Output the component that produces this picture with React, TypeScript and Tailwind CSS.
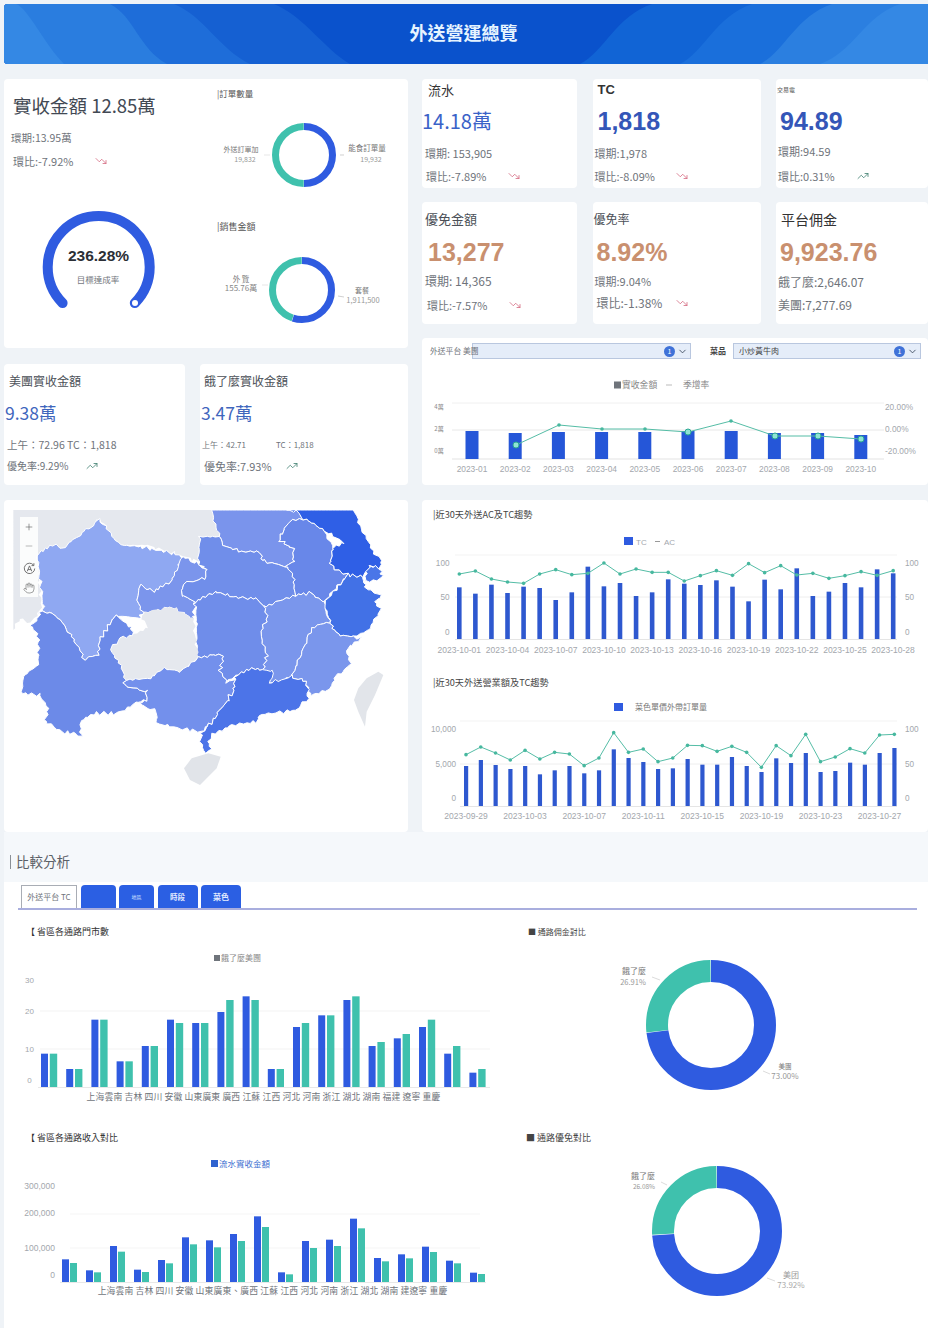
import React from "react";
import { ChevronDown, Hand, Minus, Plus, TrendingDown, TrendingUp } from "lucide-react";

const BLUE = "#2f5be0";
const TEAL = "#3fc1ad";
const GREY = "#a3a7ad";
const LATIN = "'Liberation Sans',sans-serif";

const Down = ({ className = "" }: { className?: string }) => (
  <TrendingDown size={12} strokeWidth={1.6} color="#d46a80" className={className} />
);
const Up = ({ className = "" }: { className?: string }) => (
  <TrendingUp size={12} strokeWidth={1.6} color="#3f7f70" className={className} />
);

function Ring({ cx, cy, r, sw, blue }: { cx: number; cy: number; r: number; sw: number; blue: number }) {
  const teal = 100 - blue;
  return (
    <g transform={`rotate(-90 ${cx} ${cy})`} fill="none" strokeWidth={sw}>
      <circle cx={cx} cy={cy} r={r} pathLength={100} stroke={BLUE} strokeDasharray={`${blue} ${teal}`} />
      <circle cx={cx} cy={cy} r={r} pathLength={100} stroke={TEAL} strokeDasharray={`${teal - 0.3} ${blue + 0.3}`} strokeDashoffset={-(blue + 0.15)} />
    </g>
  );
}

const T = ({ x, y, s = 8, c = "#8a8f96", a = "middle", ls, ff, children }: { x: number; y: number; s?: number; c?: string; a?: "start" | "middle" | "end"; ls?: number; ff?: string; children: React.ReactNode }) => (
  <text x={x} y={y} fontSize={s} fill={c} textAnchor={a} letterSpacing={ls} fontFamily={ff}>{children}</text>
);

function Metric({ title, value, l1, l2, arrow, cls, titleCls, valueCls, l1Cls, l2Cls }: { title: string; value: string; l1: string; l2: string; arrow?: React.ReactNode; cls: string; titleCls: string; valueCls: string; l1Cls: string; l2Cls: string }) {
  return (
    <div className={`rounded bg-white flex flex-col ${cls}`}>
      <div className={`h-4 leading-4 whitespace-nowrap ${titleCls}`}>{title}</div>
      <div className={`h-[30px] leading-[30px] whitespace-nowrap ${valueCls}`}>{value}</div>
      <div className={`h-4 leading-4 text-[#6f747b] whitespace-nowrap ${l1Cls}`}>{l1}</div>
      <div className={`h-4 leading-4 text-[#6f747b] flex items-center whitespace-nowrap ${l2Cls}`}>
        <span>{l2}</span>
        {arrow}
      </div>
    </div>
  );
}

const NUM = "font-['Liberation_Sans',sans-serif] font-bold text-[25px]";

function Select({ text, cls }: { text?: string; cls: string }) {
  return (
    <div className={`h-4 border border-[#b9c7df] bg-[#e5edf9] flex items-center ${cls}`}>
      <span className="flex-1 pl-[5px] text-[8px] text-[#444] leading-none">{text}</span>
      <span className="w-[11px] h-[11px] rounded-full bg-[#3f72d8] text-white text-[7px] leading-[11px] text-center">1</span>
      <ChevronDown size={11} strokeWidth={1.8} color="#334155" className="mx-[2px]" />
    </div>
  );
}

function Bars({ x0, step, w, base, tops, scaleY, fill = BLUE }: { x0: number; step: number; w: number; base: number; tops: number[]; scaleY: number; fill?: string }) {
  return (
    <g fill={fill}>
      {tops.map((t, i) => {
        const y = scaleY + t / 3;
        return <rect key={i} x={x0 + i * step} y={y} width={w} height={base - y} />;
      })}
    </g>
  );
}

function Trend({ x0, step, tops, scaleY, r = 1.8 }: { x0: number; step: number; tops: number[]; scaleY: number; r?: number }) {
  const pts = tops.map((t, i) => [x0 + i * step, scaleY + t / 3]);
  return (
    <g>
      <polyline points={pts.map((p) => p.join(",")).join(" ")} fill="none" stroke="#55bda6" strokeWidth={1} />
      {pts.map((p, i) => <circle key={i} cx={p[0]} cy={p[1]} r={r} fill="#47b89f" />)}
    </g>
  );
}

const A_BAR = [262,281,254,279,260,264,300,277,200,259,249,288,277,238,251,255,241,260,304,239,268,205,288,275,249,262,208,220];
const A_LINE = [222,213,237,246,250,222,209,224,220,189,222,207,217,217,243,227,212,226,191,218,197,225,220,235,227,215,226,212];
const B_BAR = [798,780,795,807,798,823,811,798,820,811,748,774,786,807,805,777,794,794,771,798,816,775,789,759,816,813,788,794,759,744];
const B_LINE = [764,741,759,780,751,777,757,762,797,774,698,757,747,785,774,736,737,754,739,757,802,737,767,703,785,771,746,759,705,703];
const C_B = [641,687,539,664,618,539,549,516,469,687,561,526,480,618,595,561,641,698];
const C_G = [641,687,539,664,618,549,549,480,480,687,549,526,469,606,582,539,618,687];
const D_B = [418,451,378,449,420,352,361,342,289,457,363,359,296,414,403,380,422,458];
const D_G = [429,457,395,456,430,373,382,363,321,463,384,378,325,424,415,396,430,462];

const MAP: [string, string][] = [
  ["#e5e8ee", "40,45 640,45 662,125 600,125 595,200 540,180 440,150 360,150 300,70 270,100 240,120 190,160 110,175 125,340 90,385 60,370 40,405"],
  ["#8fa8f2", "110,175 160,150 190,160 240,120 270,100 295,70 330,110 360,150 420,155 470,165 540,180 548,195 530,225 510,265 460,290 420,270 410,320 430,350 420,370 350,362 330,385 300,430 295,480 255,490 230,450 200,400 160,355 130,350 125,290"],
  ["#7b95ec", "548,185 590,205 620,225 615,250 550,265 545,300 585,320 580,375 540,345 500,335 445,355 430,350 410,320 420,270 460,290 510,265 530,225"],
  ["#7a94ec", "635,45 900,45 910,70 870,80 835,130 880,165 880,200 855,215 785,195 780,170 720,170 670,150 660,125"],
  ["#708eea", "600,125 660,125 670,150 720,170 780,170 785,195 855,215 880,240 885,300 840,320 790,335 770,310 740,310 700,305 645,290 585,320 545,300 550,265 615,250 620,225 595,200"],
  ["#6887e9", "910,70 870,80 835,130 880,165 880,200 855,215 880,240 885,300 930,295 975,320 1040,240 990,210 1000,155 975,110 950,90"],
  ["#2f5fe6", "860,45 1060,45 1100,130 1120,175 1145,195 1140,220 1110,210 1090,245 1040,240 990,210 1000,155 1030,140 975,110 950,90 910,70 890,50"],
  ["#4a76e8", "1110,210 1145,225 1145,250 1095,265 1095,245"],
  ["#4271e6", "1040,240 1090,245 1095,280 1145,300 1125,320 1140,345 1110,400 1060,425 1015,420 990,380 975,325"],
  ["#7a96ec", "885,300 930,295 975,320 975,345 990,380 935,400 915,450 875,545 830,560 805,565 790,525 800,480 780,420 800,370 790,335 840,320"],
  ["#7a96ec", "935,400 990,380 1015,420 1060,425 1080,430 1040,460 1050,510 1010,540 990,580 930,605 920,560 875,545 915,450"],
  ["#6f8dea", "645,290 700,305 740,310 770,310 790,335 800,370 780,420 800,480 790,525 755,520 710,540 680,560 660,530 670,480 625,480 590,490 590,380 585,320"],
  ["#e5e8ee", "420,370 440,355 500,335 540,345 580,375 585,420 595,490 540,530 490,520 450,550 375,555 360,510 335,460 360,430 395,420 445,395"],
  ["#6c8ae8", "120,350 160,355 200,400 230,450 255,490 295,480 300,430 330,385 350,362 370,380 395,395 400,420 360,430 335,460 360,510 375,555 370,570 440,590 440,615 410,625 340,655 280,655 240,680 245,725 220,715 180,710 135,680 145,640 115,600 65,595 70,545 115,510 115,420 90,395 110,380"],
  ["#7390ec", "375,555 450,550 490,520 540,530 590,490 625,480 670,480 660,530 680,560 705,555 700,590 680,620 650,660 630,690 600,710 540,700 470,685 470,650 415,625 440,615 440,590 370,570"],
  ["#4c74e8", "710,540 755,520 790,525 825,530 805,565 875,545 920,560 925,610 890,645 780,660 770,680 700,690 640,720 625,740 635,765 615,770 600,735 610,705 630,690 650,660 680,620 700,590 705,555"],
];

// Roughens a province outline: the offset depends only on position, so shared borders stay shared.
function rough(points: string): string {
  const p = points.split(" ").map((s) => s.split(",").map(Number));
  const out: string[] = [];
  p.forEach((a, i) => {
    const b = p[(i + 1) % p.length];
    const n = Math.max(1, Math.ceil(Math.hypot(b[0] - a[0], b[1] - a[1]) / 11));
    for (let k = 0; k < n; k++) {
      const x = a[0] + ((b[0] - a[0]) * k) / n;
      const y = a[1] + ((b[1] - a[1]) * k) / n;
      const f = y <= 46 || x <= 41 ? 0 : 1;
      const dx = f * (3.5 * Math.sin(y * 0.37 + x * 0.11) + 2.5 * Math.sin(x * 0.61 - y * 0.23));
      const dy = f * (3.5 * Math.sin(x * 0.33 - y * 0.13) + 2.5 * Math.sin(y * 0.57 + x * 0.29));
      out.push(`${(x + dx).toFixed(1)},${(y + dy).toFixed(1)}`);
    }
  });
  return out.join(" ");
}

export default function App() {
  return (
    <div className="w-[928px] h-[1328px] overflow-hidden bg-[#eff3f7] pt-1 font-['Noto_Sans_CJK_TC','Noto_Sans',sans-serif]">
      {/* Header */}
      <div className="relative ml-1 h-[60px] rounded-l overflow-hidden bg-[#0a52cc] flex items-center justify-center">
        <svg className="absolute inset-0" width="924" height="60" viewBox="0 0 924 60">
          <path d="M0 0H270C300 12 320 45 346 60H0Z" fill="#1560d2" />
          <path d="M0 0H170C200 12 215 45 246 60H0Z" fill="#1e6dd9" />
          <path d="M0 0H106C130 12 135 45 163 60H0Z" fill="#2a7ddf" />
          <path d="M0 0H12C24 4 40 40 60 60H0Z" fill="#3488e4" />
          <path d="M924 0H648C612 12 600 48 576 60H924Z" fill="#1164d5" />
          <path d="M924 0H748C712 12 700 48 676 60H924Z" fill="#1a6fdb" />
          <path d="M924 0H828C792 12 780 48 756 60H924Z" fill="#2b7fe0" />
          <path d="M924 0H896C860 12 850 48 816 60H924Z" fill="#3488e4" />
        </svg>
        <h1 className="relative mr-[5px] mb-[5px] text-[18px] font-bold text-[#e6f4ff] leading-none">外送營運總覽</h1>
      </div>

      {/* Top */}
      <div className="flex gap-[14px] mt-[15px] ml-1">
        <div className="w-[404px] flex flex-col">
          <div className="h-[269px] rounded bg-white flex">
            <div className="w-[205px] shrink-0">
              <div className="pl-[9px] pt-[14px] h-[39px] text-[18.5px] leading-6 text-[#424954] whitespace-nowrap">實收金額 12.85萬</div>
              <div className="pl-[7px] mt-[13px] h-[14px] text-[10.5px] leading-[14px] text-[#6f747b]">環期:13.95萬</div>
              <div className="pl-[9px] mt-[9px] h-[14px] text-[11px] leading-[14px] text-[#6f747b] flex items-center">
                <span>環比:-7.92%</span>
                <Down className="ml-[22px]" />
              </div>
              <svg className="block mt-[11px]" width="205" height="169" viewBox="4 179 205 169">
                <path d="M62.6 303.1 A51 51 0 1 1 134.8 303.1" fill="none" stroke={BLUE} strokeWidth="10" strokeLinecap="round" />
                <circle cx="135" cy="303" r="3" fill="white" />
                <text x="98.5" y="261" textAnchor="middle" fontSize="15.5" fontWeight="700" fill="#2b2f36" fontFamily={LATIN}>236.28%</text>
                <T x={98} y={283} s={8.5} c="#74787e">目標達成率</T>
              </svg>
            </div>
            <div className="flex-1 flex flex-col">
              <div className="mt-[9px] ml-2 h-[11px] text-[8.5px] leading-[11px] text-[#555]">|訂單數量</div>
              <svg className="block" width="199" height="122" viewBox="209 99 199 122">
                <Ring cx={304} cy={155} r={28.5} sw={7} blue={50} />
                <line x1="264" y1="155" x2="270" y2="155" stroke="#ddd" strokeWidth=".7" />
                <line x1="340" y1="155" x2="344" y2="155" stroke="#bbb" strokeWidth=".7" />
                <T x={241} y={152} s={7} c="#777">外送訂單加</T>
                <T x={245} y={162} s={7} c="#999">19,832</T>
                <T x={367} y={151} s={7.5} c="#777">能食訂單量</T>
                <T x={371} y={162} s={7} c="#999">19,932</T>
              </svg>
              <div className="ml-2 h-3 text-[9px] leading-3 text-[#555]">|銷售金額</div>
              <svg className="block" width="199" height="115" viewBox="209 233 199 115">
                <Ring cx={302} cy={290} r={29.5} sw={7} blue={55} />
                <line x1="262" y1="285" x2="268" y2="285" stroke="#ddd" strokeWidth=".7" />
                <line x1="338" y1="296" x2="344" y2="297" stroke="#bbb" strokeWidth=".7" />
                <T x={241} y={282} s={7.5} c="#777">外 覽</T>
                <T x={241} y={291} s={8} c="#888">155.76萬</T>
                <T x={362} y={293} s={7} c="#777">套餐</T>
                <T x={363} y={303} s={7.5} c="#999">1,911,500</T>
              </svg>
            </div>
          </div>

          <div className="flex gap-[15px] mt-4">
            <div className="w-[181px] h-[121px] rounded bg-white flex flex-col">
              <div className="pl-[5px] mt-[9px] h-4 text-[12px] leading-4 text-[#4b5057]">美團實收金額</div>
              <div className="pl-px mt-[12px] h-6 text-[17.5px] leading-6 text-[#3f66bd] whitespace-nowrap">9.38萬</div>
              <div className="pl-[3px] mt-[12px] h-4 text-[10.5px] leading-4 text-[#6f747b] whitespace-nowrap">上午：72.96 TC：1,818</div>
              <div className="pl-[3px] mt-[5px] h-4 text-[10px] leading-4 text-[#6f747b] flex items-center">
                <span>優免率:9.29%</span>
                <Up className="ml-[18px]" />
              </div>
            </div>
            <div className="w-[208px] h-[121px] rounded bg-white flex flex-col">
              <div className="pl-1 mt-[9px] h-4 text-[12px] leading-4 text-[#4b5057]">餓了麼實收金額</div>
              <div className="pl-px mt-[12px] h-6 text-[17.5px] leading-6 text-[#3f66bd] whitespace-nowrap">3.47萬</div>
              <div className="pl-[2px] mt-[12px] h-4 text-[8px] leading-4 text-[#6f747b] flex">
                <span className="w-[74px]">上午：42.71</span>
                <span>TC：1,818</span>
              </div>
              <div className="pl-1 mt-[5px] h-4 text-[11px] leading-4 text-[#6f747b] flex items-center">
                <span>優免率:7.93%</span>
                <Up className="ml-[14px]" />
              </div>
            </div>
          </div>

          <div className="relative mt-[15px] h-[332px] rounded bg-white overflow-hidden">
            <svg className="block" width="404" height="332" viewBox="12 15 1212 996">
              <polygon points="1135,530 1150,540 1125,600 1100,650 1095,695 1075,650 1062,615 1075,580 1100,550" fill="#e2e5ea" />
              <polygon points="552,820 575,790 625,775 662,785 650,820 600,870 570,855" fill="#e1e4e9" />
              {MAP.map(([fill, pts], i) => (
                <polygon key={i} points={rough(pts)} fill={fill} stroke={i === 0 || i === 12 ? "none" : "#ffffff"} strokeWidth="3" strokeLinejoin="round" />
              ))}
            </svg>
            <div className="absolute left-4 top-[17px] w-[18px] flex flex-col bg-white/85">
              <div className="h-[19px] flex items-center justify-center"><Plus size={10} strokeWidth={1.4} color="#555" /></div>
              <div className="h-[19px] flex items-center justify-center"><Minus size={10} strokeWidth={1.4} color="#888" /></div>
              <div className="h-[19px] mt-[4px] flex items-center justify-center">
                <svg width="13" height="13" viewBox="0 0 13 13" fill="none" stroke="#666" strokeWidth=".9">
                  <path d="M10.6 3.2A5.2 5.2 0 1 0 11.7 6.5" />
                  <path d="M10.9 1.2V3.6H8.5" />
                  <path d="M4.2 9.3L6.5 3.9L8.8 9.3M5 7.6H8" />
                </svg>
              </div>
              <div className="h-[19px] flex items-center justify-center"><Hand size={12} strokeWidth={1.2} color="#666" /></div>
            </div>
          </div>
        </div>

        <div className="w-[506px] flex flex-col">
          <div className="grid grid-cols-[155px_168px_152px] gap-x-[15.5px] gap-y-[14px]">
            <Metric cls="h-[109px] pt-[3px] pl-px" title="流水" value="14.18萬" l1="環期: 153,905" l2="環比:-7.89%" arrow={<Down className="ml-[22px]" />}
              titleCls="pl-[5px] text-[13px] text-[#333]" valueCls="mt-2 text-[20px] text-[#3a62c8] -ml-px" l1Cls="mt-[9px] pl-[2px] text-[11px]" l2Cls="mt-[7px] pl-[3px] text-[11px]" />
            <Metric cls="h-[109px] pt-[3px]" title="TC" value="1,818" l1="環期:1,978" l2="環比:-8.09%" arrow={<Down className="ml-[21px]" />}
              titleCls="pl-[5px] text-[13px] font-bold text-[#333] font-['Liberation_Sans',sans-serif]" valueCls={`mt-2 pl-[5px] ${NUM} text-[#3456b8]`} l1Cls="mt-[9px] pl-[2px] text-[11px]" l2Cls="mt-[7px] pl-[2px] text-[11px]" />
            <Metric cls="h-[109px] pt-[3px]" title="交易電" value="94.89" l1="環期:94.59" l2="環比:0.31%" arrow={<Up className="ml-[22px]" />}
              titleCls="pl-px text-[6px] text-[#555]" valueCls={`mt-2 pl-1 ${NUM} text-[#3456b8]`} l1Cls="mt-[7px] pl-[2px] text-[11px]" l2Cls="mt-[9px] pl-[2px] text-[11px]" />

            <Metric cls="h-[122px] pt-[9px]" title="優免金額" value="13,277" l1="環期: 14,365" l2="環比:-7.57%" arrow={<Down className="ml-[22px]" />}
              titleCls="pl-[3px] text-[13px] text-[#4b5057]" valueCls={`mt-[10px] pl-[6px] ${NUM} text-[#c9906f]`} l1Cls="mt-[6px] pl-[3px] text-[12px]" l2Cls="mt-[8px] pl-[5px] text-[11px]" />
            <Metric cls="h-[122px] pt-[9px]" title="優免率" value="8.92%" l1="環期:9.04%" l2="環比:-1.38%" arrow={<Down className="ml-[14px]" />}
              titleCls="pl-px text-[12px] text-[#4b5057]" valueCls={`mt-[10px] pl-1 ${NUM} text-[#c9906f]`} l1Cls="mt-[6px] pl-[2px] text-[11px]" l2Cls="mt-[6px] pl-1 text-[12px]" />
            <Metric cls="h-[122px] pt-[9px]" title="平台佣金" value="9,923.76" l1="餓了麼:2,646.07" l2="美團:7,277.69"
              titleCls="pl-[5px] text-[14px] text-[#333]" valueCls={`mt-[10px] pl-1 ${NUM} text-[#c9906f]`} l1Cls="mt-[7px] pl-[2px] text-[12px] text-[#5d6269]" l2Cls="mt-[7px] pl-[2px] text-[12px]" />
          </div>

          <div className="mt-[14px] h-[147px] rounded bg-white flex flex-col">
            <div className="flex items-center h-4 mt-[5px] pl-2">
              <span className="relative z-10 w-[42px] text-[7.8px] text-[#6f747b] whitespace-nowrap">外送平台 美團</span>
              <Select cls="w-[219px]" />
              <span className="ml-[19px] w-[23px] text-[8px] font-bold text-[#444]">菜品</span>
              <Select text="小炒黃牛肉" cls="w-[188px]" />
            </div>
            <svg className="block" width="506" height="126" viewBox="422 359 506 126">
              <rect x="614" y="381.5" width="7" height="7" fill="#6f747b" />
              <T x={622} y={388} s={8.8} c="#888" a="start">實收金額</T>
              <line x1="666" y1="385" x2="672" y2="385" stroke="#bbb" />
              <T x={683} y={388} s={8.8} c="#888" a="start">季增率</T>
              <line x1="452" y1="403" x2="884" y2="403" stroke="#f0f0f0" />
              <line x1="452" y1="430" x2="884" y2="430" stroke="#e8e8e8" />
              <line x1="452" y1="459" x2="884" y2="459" stroke="#e3e3e3" />
              <T x={439} y={409} s={6} c="#888">4萬</T>
              <T x={439} y={431} s={6} c="#888">2萬</T>
              <T x={439} y={453} s={6} c="#888">0萬</T>
              <T x={885} y={410} s={8.3} c={GREY} a="start" ff={LATIN}>20.00%</T>
              <T x={885} y={432} s={8.3} c={GREY} a="start" ff={LATIN}>0.00%</T>
              <T x={885} y={454} s={8.3} c={GREY} a="start" ff={LATIN}>-20.00%</T>
              {[431, 433, 432, 432, 432, 431, 431, 433, 433, 435].map((y, i) => (
                <rect key={i} x={465.5 + i * 43.2} y={y} width="13" height={459 - y} fill="#2556d8" />
              ))}
              <polyline points="516,445 559,425 602,429 645,429 688,432 731,421 775,436 818,436 861,439" fill="none" stroke="#55bda6" strokeWidth="1" />
              {[[516,445,3],[559,425,1.8],[602,429,1.8],[645,429,1.8],[688,432,3],[731,421,1.8],[775,436,3],[818,436,3],[861,439,3]].map(([x,y,r],i)=>(
                <circle key={i} cx={x} cy={y} r={r} fill={r>2?"#8fe3d4":"#47b89f"} stroke={r>2?"#2aa892":"none"} strokeWidth="1" />
              ))}
              {["01","02","03","04","05","06","07","08","09","10"].map((m, i) => (
                <T key={m} x={472 + i * 43.2} y={472} s={8.4} c={GREY} ff={LATIN}>{`2023-${m}`}</T>
              ))}
            </svg>
          </div>

          <div className="mt-[15px] h-[332px] rounded bg-white flex flex-col">
            <div className="mt-[7px] pl-[11px] h-[14px] text-[9.2px] leading-[14px] text-[#444]">|近30天外送AC及TC趨勢</div>
            <svg className="block" width="506" height="136" viewBox="422 521 506 136">
              <rect x="624" y="537" width="9" height="8" fill={BLUE} />
              <T x={636} y={544.5} s={8} c={GREY} a="start" ff={LATIN}>TC</T>
              <line x1="655" y1="541.5" x2="660" y2="541.5" stroke="#999" />
              <T x={664} y={544.5} s={8} c={GREY} a="start" ff={LATIN}>AC</T>
              <line x1="455" y1="555" x2="897" y2="555" stroke="#f3f3f3" />
              <line x1="455" y1="597" x2="897" y2="597" stroke="#eeeeee" />
              <line x1="455" y1="639.5" x2="897" y2="639.5" stroke="#e5e5e5" />
              <T x={449.5} y={566} s={8.2} c={GREY} a="end" ff={LATIN}>100</T>
              <T x={449.5} y={600} s={8.2} c={GREY} a="end" ff={LATIN}>50</T>
              <T x={449.5} y={635} s={8.2} c={GREY} a="end" ff={LATIN}>0</T>
              <T x={905} y={566} s={8.2} c={GREY} a="start" ff={LATIN}>100</T>
              <T x={905} y={600} s={8.2} c={GREY} a="start" ff={LATIN}>50</T>
              <T x={905} y={635} s={8.2} c={GREY} a="start" ff={LATIN}>0</T>
              <Bars x0={457} step={16.07} w={4.6} base={639} tops={A_BAR} scaleY={500} fill="#2e58cf" />
              <Trend x0={459.3} step={16.07} tops={A_LINE} scaleY={500} />
              {["10-01","10-04","10-07","10-10","10-13","10-16","10-19","10-22","10-25","10-28"].map((d, i) => (
                <T key={d} x={459.3 + i * 48.2} y={653} s={8.5} c={GREY} ff={LATIN}>{`2023-${d}`}</T>
              ))}
            </svg>
            <div className="mt-[18px] pl-[11px] h-[14px] text-[9.2px] leading-[14px] text-[#444]">|近30天外送營業額及TC趨勢</div>
            <svg className="block" width="506" height="135" viewBox="422 689 506 135">
              <rect x="614" y="703" width="9" height="8" fill={BLUE} />
              <T x={635} y={710} s={8} c="#777" a="start">菜色單價外帶訂單量</T>
              <line x1="460" y1="721" x2="897" y2="721" stroke="#f3f3f3" />
              <line x1="460" y1="764" x2="897" y2="764" stroke="#eeeeee" />
              <line x1="460" y1="806.5" x2="897" y2="806.5" stroke="#e5e5e5" />
              <T x={456} y={732} s={8.2} c={GREY} a="end" ff={LATIN}>10,000</T>
              <T x={456} y={767} s={8.2} c={GREY} a="end" ff={LATIN}>5,000</T>
              <T x={456} y={801} s={8.2} c={GREY} a="end" ff={LATIN}>0</T>
              <T x={905} y={732} s={8.2} c={GREY} a="start" ff={LATIN}>100</T>
              <T x={905} y={767} s={8.2} c={GREY} a="start" ff={LATIN}>50</T>
              <T x={905} y={801} s={8.2} c={GREY} a="start" ff={LATIN}>0</T>
              <Bars x0={464} step={14.77} w={4.2} base={806} tops={B_BAR} scaleY={500} fill="#2e58cf" />
              <Trend x0={466} step={14.77} tops={B_LINE} scaleY={500} />
              {["09-29","10-03","10-07","10-11","10-15","10-19","10-23","10-27"].map((d, i) => (
                <T key={d} x={466 + i * 59.08} y={819} s={8.5} c={GREY} ff={LATIN}>{`2023-${d}`}</T>
              ))}
            </svg>
          </div>
        </div>
      </div>

      {/* Compare */}
      <div className="h-[50px] bg-[#f5f8fb] ml-1 pt-[21px] pl-[6px] flex items-start">
        <div className="h-[18px] flex items-center text-[13.5px] leading-none text-[#5b6067]">
          <span className="w-px h-[14px] bg-[#8a8f96] mr-[5px]" />比較分析
        </div>
      </div>
      <div className="ml-1 h-[446px] bg-white pt-[3px]">
        <div className="ml-[14px] w-[899px] h-[25px] border-b-2 border-[#a9aede] flex gap-[3.5px]">
          <div className="ml-[3px] w-[56px] h-[23px] border border-[#a9adb5] border-b-0 bg-white text-[8px] text-[#6f747b] flex items-center justify-center whitespace-nowrap">外送平台 TC</div>
          <div className="w-[35px] h-[23px] rounded-t-sm bg-[#2b5fe3]" />
          <div className="w-[35px] h-[23px] rounded-t-sm bg-[#2b5fe3] text-[5px] text-[#d6e2ff] flex items-center justify-center">地區</div>
          <div className="w-[40px] h-[23px] rounded-t-sm bg-[#2b5fe3] text-[7.5px] font-bold text-[#e2ebff] flex items-center justify-center">時段</div>
          <div className="w-[40px] h-[23px] rounded-t-sm bg-[#2b5fe3] text-[8px] font-bold text-[#e2ebff] flex items-center justify-center">菜色</div>
        </div>
        <div className="flex">
          <div className="w-[500px] shrink-0">
            <div className="mt-4 pl-[22px] h-3 text-[9px] leading-3 text-[#333]">【 省區各通路門市數</div>
            <svg className="block" width="500" height="194" viewBox="4 938 500 194">
              <rect x="214" y="955" width="6" height="6" fill="#6f747b" />
              <T x={221} y={961} s={8} c="#888" a="start">餓了麼美團</T>
              <line x1="40" y1="1011" x2="490" y2="1011" stroke="#f3f3f3" />
              <line x1="40" y1="1049" x2="490" y2="1049" stroke="#f3f3f3" />
              <line x1="38" y1="1087.5" x2="490" y2="1087.5" stroke="#e8e8e8" />
              {[["30",983],["20",1014],["10",1052],["0",1083]].map(([t,y]) => (
                <T key={t as string} x={29.5} y={y as number} s={8} c={GREY} ff={LATIN}>{t}</T>
              ))}
              <Bars x0={41} step={25.2} w={7} base={1087} tops={C_B} scaleY={840} fill="#2f5be0" />
              <Bars x0={49.8} step={25.2} w={7.4} base={1087} tops={C_G} scaleY={840} fill={TEAL} />
              <T x={263.5} y={1100} s={8.8} c="#6f747b" ls={0.15}>上海雲南 吉林 四川 安徽 山東廣東 廣西 江蘇 江西 河北 河南 浙江 湖北 湖南 福建 遼寧 重慶</T>
            </svg>
            <div className="pl-[22px] h-3 text-[9px] leading-3 text-[#333]">【 省區各通路收入對比</div>
            <svg className="block" width="500" height="184" viewBox="4 1144 500 184">
              <rect x="211" y="1160" width="7" height="7" fill="#2f62cf" />
              <T x={219} y={1167} s={8.5} c="#3a6ed0" a="start">流水實收金額</T>
              <line x1="70" y1="1214" x2="480" y2="1214" stroke="#f5f5f5" />
              <line x1="70" y1="1248" x2="480" y2="1248" stroke="#f5f5f5" />
              <line x1="60" y1="1282.5" x2="486" y2="1282.5" stroke="#e8e8e8" />
              {[["300,000",1189],["200,000",1216],["100,000",1251],["0",1278]].map(([t,y]) => (
                <T key={t as string} x={55} y={y as number} s={8.5} c={GREY} a="end" ff={LATIN}>{t}</T>
              ))}
              <Bars x0={62} step={24} w={7} base={1282} tops={D_B} scaleY={1120} fill="#2f5be0" />
              <Bars x0={70} step={24} w={7} base={1282} tops={D_G} scaleY={1120} fill={TEAL} />
              <T x={272.5} y={1294} s={8.8} c="#6f747b" ls={0.15}>上海雲南 吉林 四川 安徽 山東廣東、廣西 江蘇 江西 河北 河南 浙江 湖北 湖南 建遼寧 重慶</T>
            </svg>
          </div>
          <div className="flex-1">
            <div className="mt-4 pl-6 h-3 text-[8px] leading-3 text-[#444]">■ 通路佣金對比</div>
            <svg className="block" width="424" height="194" viewBox="504 938 424 194">
              <Ring cx={711} cy={1025} r={54} sw={22} blue={73} />
              <T x={634} y={974} s={8} c="#777">餓了麼</T>
              <T x={633} y={985} s={7.5} c="#999">26.91%</T>
              <path d="M652 977 L660 980" stroke="#ccc" strokeWidth=".7" fill="none" />
              <T x={785} y={1069} s={6.5} c="#777">美團</T>
              <T x={785} y={1079} s={8} c="#999">73.00%</T>
              <path d="M763 1071 L770 1074" stroke="#ccc" strokeWidth=".7" fill="none" />
            </svg>
            <div className="pl-[22px] h-3 text-[9px] leading-3 text-[#444]">■ 通路優免對比</div>
            <svg className="block" width="424" height="184" viewBox="504 1144 424 184">
              <Ring cx={717} cy={1231} r={54} sw={22} blue={73.9} />
              <T x={643} y={1179} s={8} c="#777">餓了麼</T>
              <T x={644} y={1189} s={6.5} c="#999">26.08%</T>
              <path d="M661 1182 L667 1185" stroke="#ccc" strokeWidth=".7" fill="none" />
              <T x={791} y={1278} s={8} c="#999">美团</T>
              <T x={791} y={1288} s={8} c="#aaa">73.92%</T>
              <path d="M767 1278 L775 1281" stroke="#ccc" strokeWidth=".7" fill="none" />
            </svg>
          </div>
        </div>
      </div>
    </div>
  );
}
